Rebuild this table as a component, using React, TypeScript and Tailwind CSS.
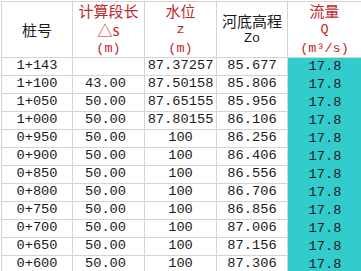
// 水面线计算表 — 桩号 / 计算段长 / 水位 / 河底高程 / 流量
const CJK = { fontFamily: '"Noto Sans CJK SC", "Noto Sans", sans-serif' };
const MONO = { fontFamily: '"Liberation Mono", "Noto Sans CJK SC", monospace' };

type Row = { sta: string; ds: string; z: string; zo: string; q: string };

const rows: Row[] = [
  { sta: '1+143', ds: '', z: '87.37257', zo: '85.677', q: '17.8' },
  { sta: '1+100', ds: '43.00', z: '87.50158', zo: '85.806', q: '17.8' },
  { sta: '1+050', ds: '50.00', z: '87.65155', zo: '85.956', q: '17.8' },
  { sta: '1+000', ds: '50.00', z: '87.80155', zo: '86.106', q: '17.8' },
  { sta: '0+950', ds: '50.00', z: '100', zo: '86.256', q: '17.8' },
  { sta: '0+900', ds: '50.00', z: '100', zo: '86.406', q: '17.8' },
  { sta: '0+850', ds: '50.00', z: '100', zo: '86.556', q: '17.8' },
  { sta: '0+800', ds: '50.00', z: '100', zo: '86.706', q: '17.8' },
  { sta: '0+750', ds: '50.00', z: '100', zo: '86.856', q: '17.8' },
  { sta: '0+700', ds: '50.00', z: '100', zo: '87.006', q: '17.8' },
  { sta: '0+650', ds: '50.00', z: '100', zo: '87.156', q: '17.8' },
  { sta: '0+600', ds: '50.00', z: '100', zo: '87.306', q: '17.8' },
];

const cell = 'flex items-center justify-center border-r border-b border-[#d4d4d4]';

type Line = { text: string; cjk?: boolean };

function HeadCell({ lines, red }: { lines: Line[]; red?: boolean }) {
  return (
    <div className={`${cell} flex-col gap-[2px] h-[56px] ${red ? 'text-[#c0282d]' : 'text-[#1a1a1a]'}`}>
      {lines.map((l, i) => (
        <span
          key={i}
          className={`flex items-center h-[17px] leading-none ${l.cjk ? 'text-[15px]' : 'text-[13.5px]'}`}
          style={l.cjk ? CJK : MONO}
        >
          {l.text}
        </span>
      ))}
    </div>
  );
}

export default function App() {
  return (
    <div className="w-[361px] h-[271px] overflow-hidden bg-white">
      <div className="ml-px mt-px border-l border-t border-[#d4d4d4] grid grid-cols-[71px_72px_72px_71px_74px] text-[#1a1a1a]">
        {/* Kopfzeile */}
        <HeadCell lines={[{ text: '桩号', cjk: true }]} />
        <HeadCell
          red
          lines={[
            { text: '计算段长', cjk: true },
            { text: '△s', cjk: true },
            { text: '(m)' },
          ]}
        />
        <HeadCell
          red
          lines={[
            { text: '水位', cjk: true },
            { text: 'z' },
            { text: '(m)' },
          ]}
        />
        <HeadCell lines={[{ text: '河底高程', cjk: true }, { text: 'Zo' }]} />
        <HeadCell
          red
          lines={[
            { text: '流量', cjk: true },
            { text: 'Q' },
            { text: '(m³/s)' },
          ]}
        />

        {/* Datenzeilen */}
        {rows.map((r) => (
          <div key={r.sta} className="contents text-[13.7px]" style={MONO}>
            <div className={`${cell} h-[18px]`}>{r.sta}</div>
            <div className={`${cell} h-[18px] pr-[6px]`}>{r.ds}</div>
            <div className={`${cell} h-[18px]`}>{r.z}</div>
            <div className={`${cell} h-[18px]`}>{r.zo}</div>
            <div className="flex items-center justify-center h-[18px] bg-[#33cccc]">{r.q}</div>
          </div>
        ))}
      </div>
    </div>
  );
}
